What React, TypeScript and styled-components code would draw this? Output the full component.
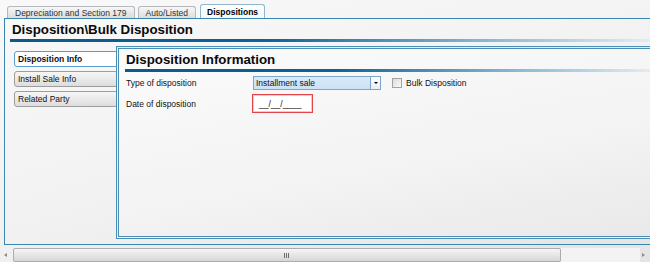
import React from "react";
import styled, { createGlobalStyle } from "styled-components";

const GlobalStyle = createGlobalStyle`
  html, body {
    margin: 0;
    padding: 0;
  }
  body {
    width: 650px;
    height: 262px;
    overflow: hidden;
    background: linear-gradient(165deg, #f9f9f9 0%, #f1f1f1 55%, #e4e4e4 100%);
    font-family: "Liberation Sans", Arial, sans-serif;
    font-size: 8.5px;
    color: #111;
  }
`;

const Page = styled.div`
  width: 650px;
  height: 262px;
  display: flex;
  flex-direction: column;
`;

const TabStrip = styled.div`
  display: flex;
  align-items: flex-end;
  height: 18px;
  padding-left: 7px;
  gap: 3px;
`;

const Tab = styled.div<{ $active?: boolean }>`
  height: ${(p) => (p.$active ? 14 : 12)}px;
  padding: 0 ${(p) => (p.$active ? 6 : 7)}px;
  margin-left: ${(p) => (p.$active ? 1 : 0)}px;
  display: flex;
  align-items: center;
  box-sizing: border-box;
  border: 1px solid ${(p) => (p.$active ? "#8fb6cc" : "#b3b9be")};
  border-bottom: none;
  border-radius: 3px 3px 0 0;
  background: ${(p) =>
    p.$active ? "linear-gradient(#ffffff, #f3f8fb)" : "linear-gradient(#f7f7f7, #dcdcdc)"};
  font-weight: ${(p) => (p.$active ? "bold" : "normal")};
  color: ${(p) => (p.$active ? "#000" : "#333")};
  white-space: nowrap;
`;

const Frame = styled.div`
  margin-left: 4px;
  height: 227px;
  box-sizing: border-box;
  border-top: 1px solid #3b86ae;
  border-left: 1px solid #3b86ae;
  border-bottom: 1px solid #3b86ae;
  display: flex;
  flex-direction: column;
`;

const FrameTitle = styled.div`
  height: 20px;
  padding-left: 7px;
  display: flex;
  align-items: center;
  font-size: 13.3px;
  font-weight: bold;
  color: #0a0a0a;
  white-space: nowrap;
`;

const FadeBar = styled.div<{ $indent: number }>`
  height: 3px;
  margin-left: ${(p) => p.$indent}px;
  background: linear-gradient(to right, #0a5a8d 0%, #0f6196 40%, #8bb9d3 75%, #e2ecf1 100%);
`;

const Body = styled.div`
  flex: 1;
  display: flex;
  margin-top: 4px;
  margin-bottom: 5px;
`;

const Nav = styled.div`
  width: 111px;
  padding: 5px 0 0 9px;
  box-sizing: border-box;
  display: flex;
  flex-direction: column;
  gap: 4px;
`;

const NavButton = styled.div<{ $active?: boolean }>`
  width: 104px;
  height: 16px;
  box-sizing: border-box;
  padding-left: 3px;
  display: flex;
  align-items: center;
  border: 1px solid ${(p) => (p.$active ? "#5b9ccc" : "#9d9d9d")};
  border-radius: 3px;
  background: ${(p) => (p.$active ? "#ffffff" : "linear-gradient(#f6f6f6, #dddddd)")};
  font-weight: ${(p) => (p.$active ? "bold" : "normal")};
  color: #111;
  white-space: nowrap;
`;

const Panel = styled.div`
  flex: 1;
  position: relative;
  z-index: 1;
  border-top: 3px double #4a8db5;
  border-left: 3px double #4a8db5;
  border-bottom: 3px double #4a8db5;
  display: flex;
  flex-direction: column;
  background: linear-gradient(170deg, #fbfbfb 0%, #f3f3f3 60%, #e9e9e9 100%);
`;

const PanelTitle = styled.div`
  height: 20px;
  padding-left: 7px;
  display: flex;
  align-items: center;
  font-size: 13.3px;
  font-weight: bold;
  color: #0a0a0a;
  white-space: nowrap;
`;

const Form = styled.div`
  padding: 4px 0 0 7px;
  display: flex;
  flex-direction: column;
  gap: 4px;
`;

const Row = styled.div`
  display: flex;
  align-items: center;
`;

const Label = styled.div`
  width: 127px;
  white-space: nowrap;
`;

const Select = styled.div`
  width: 128px;
  height: 14px;
  box-sizing: border-box;
  border: 1px solid #7ea6cb;
  background: linear-gradient(#d9eafa, #cbe1f6);
  display: flex;
  align-items: center;
`;

const SelectValue = styled.div`
  flex: 1;
  padding-left: 2px;
  white-space: nowrap;
`;

const SelectButton = styled.div`
  width: 9px;
  height: 100%;
  border-left: 1px solid #7ea6cb;
  background: linear-gradient(#ffffff, #e8eef4);
  display: flex;
  align-items: center;
  justify-content: center;
`;

const Arrow = styled.div`
  width: 0;
  height: 0;
  border-left: 2px solid transparent;
  border-right: 2px solid transparent;
  border-top: 2px solid #000;
`;

const CheckBox = styled.div`
  width: 10px;
  height: 10px;
  margin-left: 11px;
  box-sizing: border-box;
  border: 1px solid #a2a2a2;
  background: linear-gradient(135deg, #dcdcdc, #fafafa);
`;

const CheckLabel = styled.div`
  margin-left: 4px;
  white-space: nowrap;
`;

const DateInput = styled.div`
  width: 61px;
  height: 19px;
  margin-left: -1px;
  box-sizing: border-box;
  border: 1px solid #e3434a;
  box-shadow: inset 0 0 0 1px #f6c5c7;
  background: #fff;
  padding-left: 6px;
  display: flex;
  align-items: center;
`;

const ScrollBar = styled.div`
  margin-top: 3px;
  height: 14px;
  display: flex;
  align-items: stretch;
`;

const ScrollArrow = styled.div<{ $side: "left" | "right" }>`
  width: ${(p) => (p.$side === "left" ? 13 : 10)}px;
  display: flex;
  align-items: center;
  justify-content: ${(p) => (p.$side === "left" ? "flex-start" : "flex-end")};
  padding: ${(p) => (p.$side === "left" ? "0 0 0 4px" : "0 5px 0 0")};
  box-sizing: border-box;
  &::before {
    content: "";
    width: 0;
    height: 0;
    border-top: 2.5px solid transparent;
    border-bottom: 2.5px solid transparent;
    ${(p) => (p.$side === "left" ? "border-right: 3px solid #8a8a8a;" : "border-left: 3px solid #8a8a8a;")}
  }
`;

const Thumb = styled.div`
  width: 548px;
  box-sizing: border-box;
  border: 1px solid #acacac;
  border-radius: 2px;
  background: linear-gradient(#f6f6f6, #e6e6e6 50%, #d6d6d6);
  display: flex;
  align-items: center;
  justify-content: center;
`;

const Grip = styled.div`
  width: 6px;
  height: 5px;
  background: repeating-linear-gradient(to right, #6d6d6d 0 1px, transparent 1px 2px);
`;

const Track = styled.div`
  flex: 1;
  background: #f3f3f3;
`;

export default function App() {
  return (
    <Page>
      <GlobalStyle />
      <TabStrip>
        <Tab>Depreciation and Section 179</Tab>
        <Tab>Auto/Listed</Tab>
        <Tab $active>Dispositions</Tab>
      </TabStrip>
      <Frame>
        <FrameTitle>Disposition\Bulk Disposition</FrameTitle>
        <FadeBar $indent={5} />
        <Body>
          <Nav>
            <NavButton $active>Disposition Info</NavButton>
            <NavButton>Install Sale Info</NavButton>
            <NavButton>Related Party</NavButton>
          </Nav>
          <Panel>
            <PanelTitle>Disposition Information</PanelTitle>
            <FadeBar $indent={6} />
            <Form>
              <Row>
                <Label>Type of disposition</Label>
                <Select>
                  <SelectValue>Installment sale</SelectValue>
                  <SelectButton>
                    <Arrow />
                  </SelectButton>
                </Select>
                <CheckBox />
                <CheckLabel>Bulk Disposition</CheckLabel>
              </Row>
              <Row>
                <Label>Date of disposition</Label>
                <DateInput>__/__/____</DateInput>
              </Row>
            </Form>
          </Panel>
        </Body>
      </Frame>
      <ScrollBar>
        <ScrollArrow $side="left" />
        <Thumb>
          <Grip />
        </Thumb>
        <Track />
        <ScrollArrow $side="right" />
      </ScrollBar>
    </Page>
  );
}
